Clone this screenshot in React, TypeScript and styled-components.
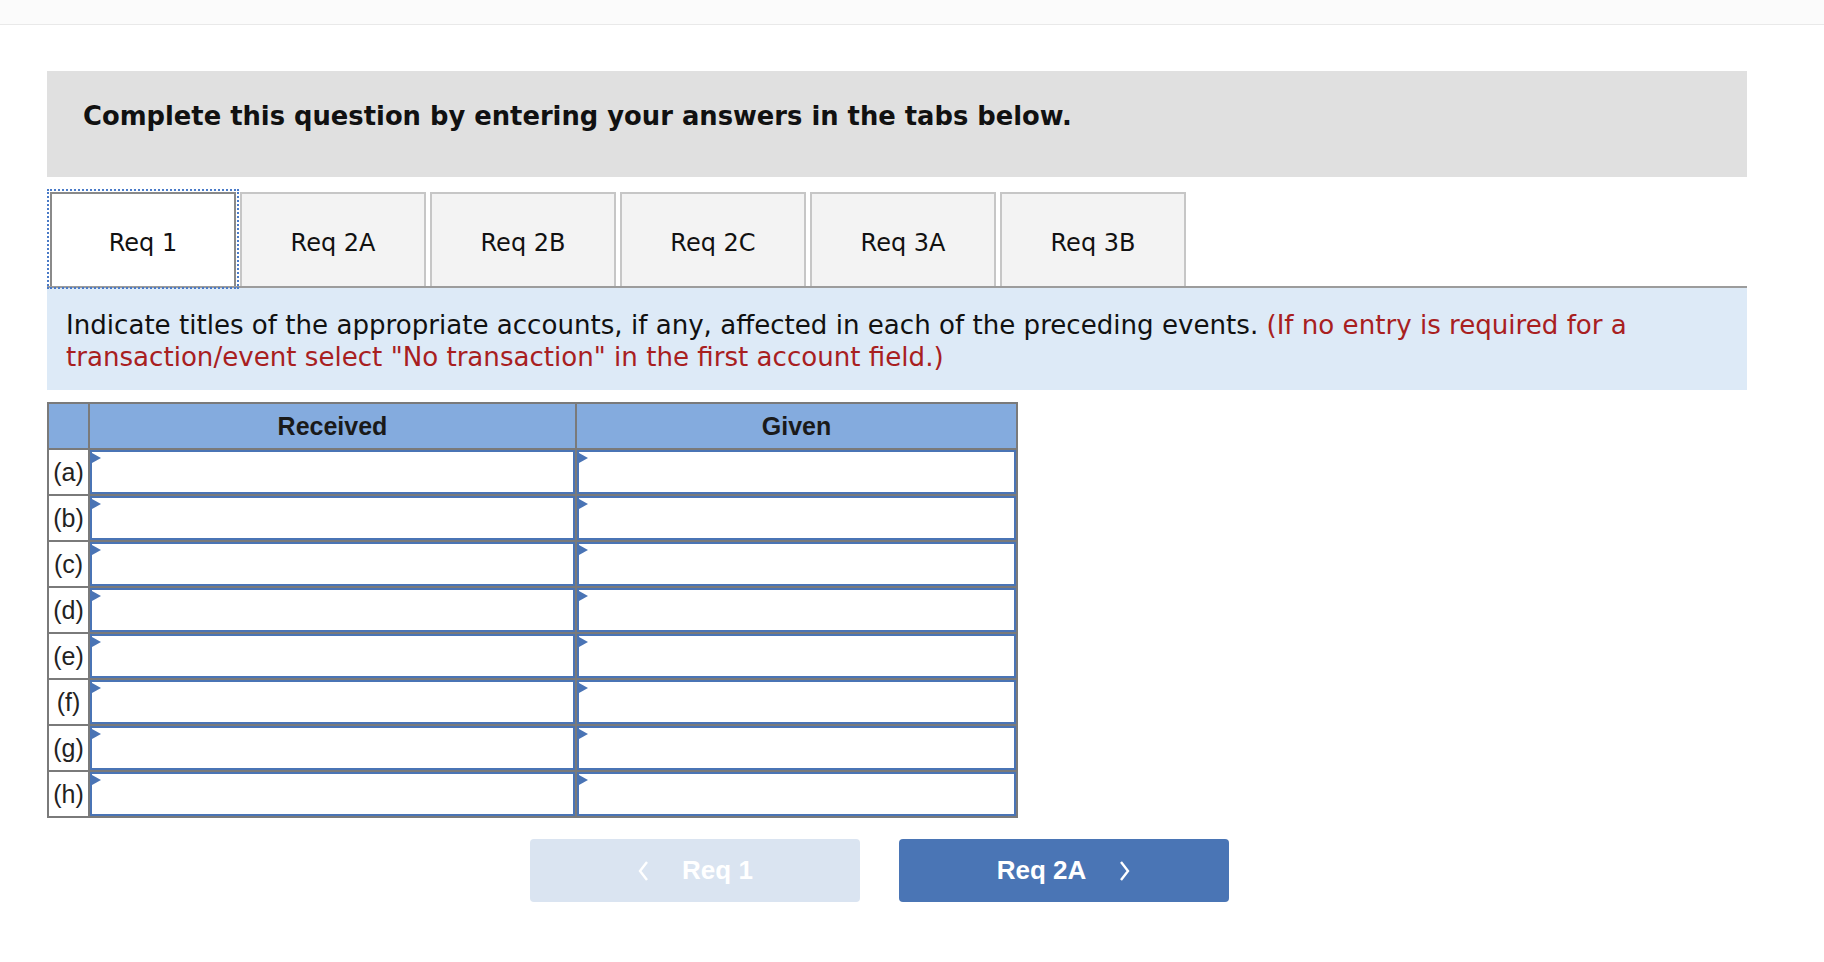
import styled, { createGlobalStyle } from "styled-components";

const GlobalStyle = createGlobalStyle`
  body {
    margin: 0;
    background: #ffffff;
    font-family: "DejaVu Sans", Verdana, sans-serif;
  }
`;

const TopStrip = styled.div`
  height: 24px;
  background: #fbfbfb;
  border-bottom: 1px solid #e9e9e9;
`;

const Main = styled.main`
  padding: 0 77px 0 47px;
`;

const Banner = styled.div`
  margin-top: 46px;
  height: 106px;
  box-sizing: border-box;
  padding: 30px 36px;
  background: #e0e0e0;
  font-weight: bold;
  font-size: 25.8px;
  color: #111;
`;

const TabBar = styled.div`
  margin-top: 15px;
  display: flex;
  padding-left: 3px;
  border-bottom: 2px solid #9c9c9c;
`;

const Tab = styled.div<{ $active?: boolean }>`
  width: 186px;
  height: 94px;
  box-sizing: border-box;
  margin-right: 4px;
  padding-top: 6px;
  display: flex;
  align-items: center;
  justify-content: center;
  font-size: 24px;
  color: #111;
  background: ${(p) => (p.$active ? "#ffffff" : "#f3f3f3")};
  border: 2px solid ${(p) => (p.$active ? "#8a8a8a" : "#c6c6c6")};
  border-bottom: none;
  outline: ${(p) => (p.$active ? "2px dotted #4a7bc8" : "none")};
  outline-offset: 1px;
`;

const Instructions = styled.div`
  background: #ddeaf7;
  padding: 21px 20px 17px 19px;
  font-size: 26.1px;
  line-height: 32px;
  color: #111;
`;

const Note = styled.span`
  color: #a8201f;
`;

const Grid = styled.table`
  margin-top: 12px;
  border-collapse: collapse;
  table-layout: fixed;
  width: 963px;
  font-family: "Liberation Sans", Arial, sans-serif;
`;

const HeadCell = styled.th<{ $w: number }>`
  width: ${(p) => p.$w}px;
  height: 44px;
  background: #84abde;
  border: 2px solid #7a7a7a;
  font-size: 25px;
  font-weight: bold;
  color: #1a1a1a;
  padding: 0;
`;

const LabelCell = styled.td`
  border: 2px solid #7a7a7a;
  font-size: 25px;
  color: #222;
  text-align: center;
  padding: 0;
`;

const FieldCell = styled.td`
  border: 2px solid #7a7a7a;
  padding: 0;
`;

const Field = styled.div`
  position: relative;
  height: 44px;
  box-sizing: border-box;
  border: 2px solid #4a74b5;
  background: #fff;

  &::before {
    content: "";
    position: absolute;
    top: 1px;
    left: 0;
    border-left: 9px solid #4a74b5;
    border-top: 5px solid transparent;
    border-bottom: 5px solid transparent;
  }
`;

const Nav = styled.div`
  margin-top: 21px;
  padding-left: 483px;
  display: flex;
  gap: 39px;
`;

const NavButton = styled.button<{ $primary?: boolean }>`
  width: 330px;
  height: 63px;
  border: none;
  border-radius: 4px;
  display: flex;
  align-items: center;
  justify-content: center;
  gap: 33px;
  font-family: "Liberation Sans", Arial, sans-serif;
  font-weight: bold;
  font-size: 26px;
  color: #fff;
  background: ${(p) => (p.$primary ? "#4a75b5" : "#dae4f1")};
  cursor: ${(p) => (p.$primary ? "pointer" : "default")};
`;

function Chevron({ dir }: { dir: "left" | "right" }) {
  return (
    <svg width="12" height="22" viewBox="0 0 12 22">
      <polyline
        points={dir === "left" ? "10,2 3,11 10,20" : "2,2 9,11 2,20"}
        fill="none"
        stroke="#fff"
        strokeWidth="2.4"
      />
    </svg>
  );
}

const tabs = ["Req 1", "Req 2A", "Req 2B", "Req 2C", "Req 3A", "Req 3B"];
const rows = ["a", "b", "c", "d", "e", "f", "g", "h"];

export default function App() {
  return (
    <>
      <GlobalStyle />
      <TopStrip />
      <Main>
        <Banner>Complete this question by entering your answers in the tabs below.</Banner>
        <TabBar>
          {tabs.map((t, i) => (
            <Tab key={t} $active={i === 0}>
              {t}
            </Tab>
          ))}
        </TabBar>
        <Instructions>
          Indicate titles of the appropriate accounts, if any, affected in each of the preceding events.{" "}
          <Note>
            (If no entry is required for a transaction/event select "No transaction" in the first account field.)
          </Note>
        </Instructions>
        <Grid>
          <thead>
            <tr>
              <HeadCell $w={39} />
              <HeadCell $w={485}>Received</HeadCell>
              <HeadCell $w={439}>Given</HeadCell>
            </tr>
          </thead>
          <tbody>
            {rows.map((r) => (
              <tr key={r}>
                <LabelCell>({r})</LabelCell>
                <FieldCell>
                  <Field />
                </FieldCell>
                <FieldCell>
                  <Field />
                </FieldCell>
              </tr>
            ))}
          </tbody>
        </Grid>
        <Nav>
          <NavButton>
            <Chevron dir="left" />
            Req 1
          </NavButton>
          <NavButton $primary>
            Req 2A
            <Chevron dir="right" />
          </NavButton>
        </Nav>
      </Main>
    </>
  );
}
